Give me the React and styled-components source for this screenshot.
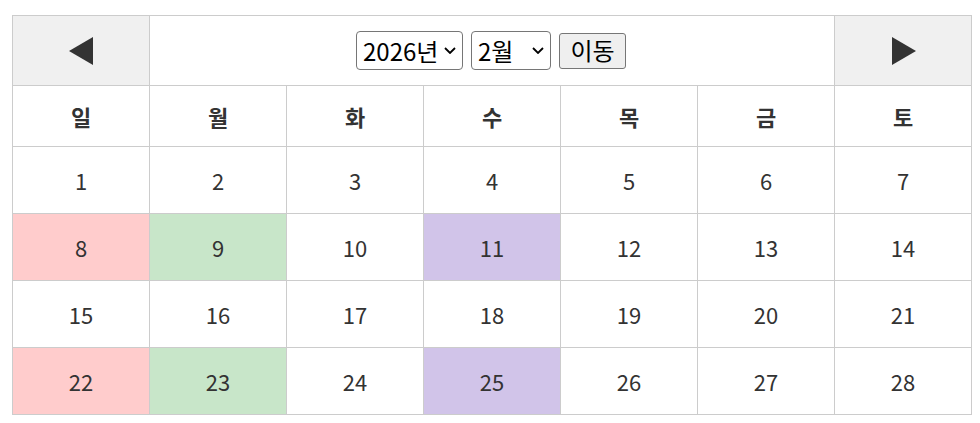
import React, { useState } from "react";
import styled, { createGlobalStyle } from "styled-components";

const Global = createGlobalStyle`
  html, body { margin: 0; padding: 0; background: #fff; }
  body { font-family: "Noto Sans CJK KR", "Noto Sans", sans-serif; color: #333; }
  *, *::before, *::after { box-sizing: border-box; }
`;

const Page = styled.div`
  padding: 15px 0 0 12px;
`;

const Table = styled.table`
  width: 960px;
  border-collapse: collapse;
  table-layout: fixed;
`;

const Cell = styled.td`
  border: 1px solid #ccc;
  text-align: center;
  vertical-align: middle;
  padding: 0;
  font-size: 22px;
  color: #333;
  background: ${(p) => p.$bg || "#fff"};
`;

const NavCell = styled(Cell)`
  background: #f0f0f0;
  cursor: pointer;
`;

const HeadCell = styled.th`
  border: 1px solid #ccc;
  text-align: center;
  font-size: 22px;
  font-weight: 700;
  color: #333;
  padding: 0;
`;

const TopRow = styled.tr`height: 70px;`;
const DayRow = styled.tr`height: 61px;`;
const DateRow = styled.tr`height: 67px;`;

const Controls = styled.div`
  display: flex;
  justify-content: center;
  align-items: center;
  gap: 8px;
  padding-right: 2px;
`;

const chevron =
  "url(\"data:image/svg+xml;utf8,<svg xmlns='http://www.w3.org/2000/svg' width='12' height='7' viewBox='0 0 12 7'><path d='M1 1 L6 6 L11 1' fill='none' stroke='black' stroke-width='1.8'/></svg>\")";

const Select = styled.select`
  appearance: none;
  -webkit-appearance: none;
  margin: 0;
  font-family: "Noto Sans CJK KR", "Noto Sans", sans-serif;
  font-size: 24px;
  line-height: 1;
  height: 39px;
  color: #000;
  border: 1px solid #767676;
  border-radius: 4px;
  background: #fff ${chevron} no-repeat right 6px center;
  padding: 0 0 0 6px;
  width: ${(p) => p.$w}px;
`;

const GoButton = styled.button`
  margin: 0;
  font-family: "Noto Sans CJK KR", "Noto Sans", sans-serif;
  font-size: 24px;
  line-height: 1;
  height: 36px;
  width: 67px;
  padding: 0 0 2px;
  color: #000;
  background: #efefef;
  border: 1px solid #767676;
  border-radius: 3px;
`;

const Arrow = styled.svg`
  display: block;
  margin: 0 auto;
`;

const colors = { 0: "#ffcccc", 1: "#c8e6c9", 3: "#d1c4e9" };

export default function App() {
  const [year, setYear] = useState(2026);
  const [month, setMonth] = useState(2);
  const weeks = [];
  for (let w = 0; w < 4; w++) {
    const row = [];
    for (let d = 0; d < 7; d++) row.push(w * 7 + d + 1);
    weeks.push(row);
  }
  const days = ["일", "월", "화", "수", "목", "금", "토"];
  return (
    <Page>
      <Global />
      <Table>
        <tbody>
          <TopRow>
            <NavCell>
              <Arrow width="25" height="28" viewBox="0 0 25 28">
                <polygon points="0,14 24,0 24,28" fill="#333" />
              </Arrow>
            </NavCell>
            <Cell colSpan={5}>
              <Controls>
                <Select $w={107} value={year} onChange={(e) => setYear(+e.target.value)}>
                  {[2024, 2025, 2026, 2027, 2028].map((y) => (
                    <option key={y} value={y}>{y}년</option>
                  ))}
                </Select>
                <Select $w={80} value={month} onChange={(e) => setMonth(+e.target.value)}>
                  {Array.from({ length: 12 }, (_, i) => i + 1).map((m) => (
                    <option key={m} value={m}>{m}월</option>
                  ))}
                </Select>
                <GoButton>이동</GoButton>
              </Controls>
            </Cell>
            <NavCell>
              <Arrow width="25" height="28" viewBox="0 0 25 28">
                <polygon points="1,0 25,14 1,28" fill="#333" />
              </Arrow>
            </NavCell>
          </TopRow>
          <DayRow>
            {days.map((d) => (
              <HeadCell key={d}>{d}</HeadCell>
            ))}
          </DayRow>
          {weeks.map((row, wi) => (
            <DateRow key={wi}>
              {row.map((n, di) => (
                <Cell key={n} $bg={wi % 2 === 1 ? colors[di] : undefined}>{n}</Cell>
              ))}
            </DateRow>
          ))}
        </tbody>
      </Table>
    </Page>
  );
}
